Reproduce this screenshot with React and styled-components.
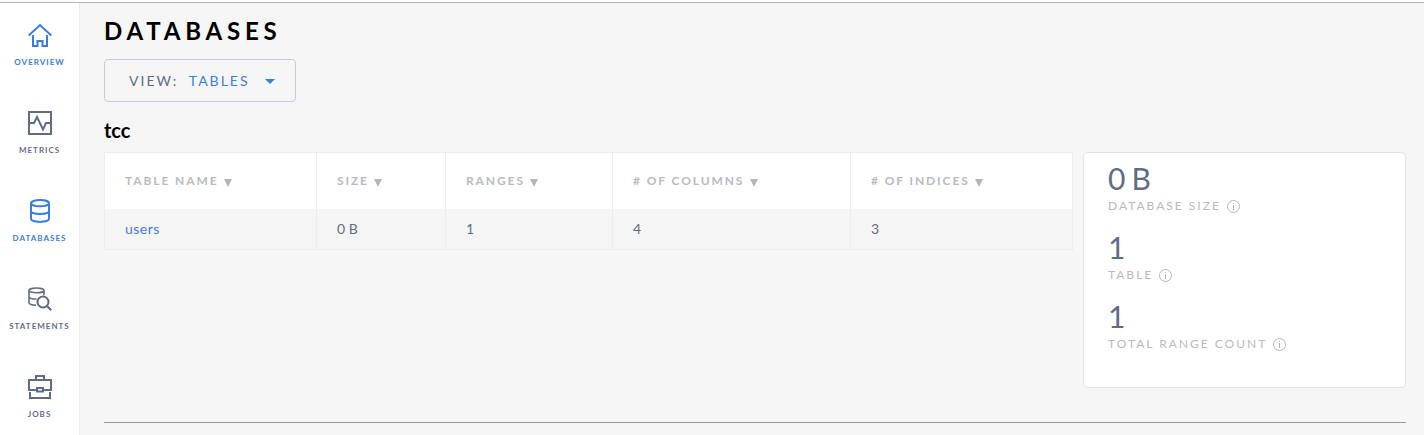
import React from "react";
import styled, { createGlobalStyle } from "styled-components";

const GlobalStyle = createGlobalStyle`
  *, *::before, *::after { box-sizing: border-box; }
  body {
    margin: 0;
    background: #f6f6f6;
    font-family: Lato, "Liberation Sans", sans-serif;
    color: #5f6c87;
    overflow: hidden;
  }
`;

const Page = styled.div`
  display: flex;
  flex-direction: column;
  height: 100vh;
  overflow: hidden;
`;

const TopEdge = styled.div`
  flex: none;
  height: 3px;
  background: #fcfcfc;
  border-bottom: 1px solid #b4b4b4;
`;

const Body = styled.div`
  display: flex;
  flex: 1;
  min-height: 0;
`;

const Sidebar = styled.nav`
  flex: none;
  width: 80px;
  background: #fff;
  border-right: 1px solid #ececec;
`;

const NavItem = styled.a`
  display: flex;
  flex-direction: column;
  align-items: center;
  height: 88px;
  padding-top: 20px;
  color: ${(p) => (p.$active ? "#3a7de1" : "#5f6c87")};

  svg {
    display: block;
    flex: none;
    margin-left: 1px;
  }
`;

const NavLabel = styled.span`
  margin-top: 10px;
  font-size: 8px;
  line-height: 10px;
  font-weight: 700;
  letter-spacing: 1px;
  white-space: nowrap;
`;

const Main = styled.main`
  flex: 1;
  min-width: 0;
  padding: 13px 18px 0 24px;
`;

const Title = styled.h1`
  margin: 0;
  font-size: 24px;
  line-height: 30px;
  font-weight: 700;
  letter-spacing: 4.8px;
  color: #000;
`;

const Dropdown = styled.div`
  display: flex;
  align-items: center;
  width: 192px;
  height: 43px;
  margin-top: 13px;
  padding: 0 20px 0 24px;
  border: 1px solid #c8cad8;
  border-radius: 4px;
  font-size: 14px;
  letter-spacing: 2px;
`;

const DropdownValue = styled.span`
  margin-left: 10.5px;
  color: #3a7de1;
`;

const Caret = styled.span`
  margin: 1px 0 0 15px;
  border: 5px solid transparent;
  border-top-color: #3a7de1;
  border-bottom: 0;
`;

const SectionTitle = styled.h2`
  margin: 16px 0 10px;
  font-size: 20px;
  line-height: 24px;
  font-weight: 700;
  letter-spacing: 0;
  color: #000;
`;

const Content = styled.div`
  display: flex;
  align-items: flex-start;
  gap: 10px;
`;

const Table = styled.table`
  flex: none;
  width: 969px;
  table-layout: fixed;
  border-collapse: collapse;
  border: 1px solid #ececec;
`;

const HeadCell = styled.th`
  width: ${(p) => p.$width}px;
  height: 56px;
  padding: 0 20px 1px;
  background: #fff;
  border-right: 1px solid #ececec;
  text-align: left;
  font-size: 12px;
  font-weight: 700;
  letter-spacing: 1.9px;
  white-space: nowrap;
  color: #b8bbbd;
`;

const SortMark = styled.span`
  display: inline-block;
  margin-left: 5.5px;
  border: 4px solid transparent;
  border-top: 8px solid #b4b7b9;
  border-bottom: 0;
  vertical-align: -2px;
`;

const Cell = styled.td`
  height: 41px;
  padding: 0 20px;
  background: #f5f5f5;
  border-right: 1px solid #ececec;
  font-size: 14px;
  color: ${(p) => (p.$link ? "#3a7de1" : "#5f6c87")};
  letter-spacing: ${(p) => (p.$link ? "0.5px" : "0")};
`;

const Summary = styled.aside`
  flex: 1;
  height: 236px;
  padding: 6px 24px;
  background: #fff;
  border: 1px solid #e4e4e4;
  border-radius: 5px;
`;

const Stat = styled.div`
  height: 69px;
`;

const StatValue = styled.div`
  font-size: 30px;
  line-height: 38px;
  word-spacing: -1.5px;
`;

const StatLabel = styled.div`
  display: flex;
  align-items: center;
  gap: 6px;
  height: 16px;
  font-size: 12px;
  letter-spacing: 2px;
  color: #b8bbbd;

  svg {
    display: block;
    margin-top: 3px;
  }
`;

const Rule = styled.hr`
  margin: 34px 0 0;
  border: 0;
  border-top: 1px solid #979797;
`;

const Icon = ({ children }) => (
  <svg width="24" height="24" viewBox="0 0 24 24" fill="none" stroke="currentColor" strokeWidth="2">
    {children}
  </svg>
);

const icons = {
  overview: (
    <Icon>
      <path d="M.7 12.5 12 2l11.3 10.5M5 12v11h4.5v-5h5v5H19V12" />
    </Icon>
  ),
  metrics: (
    <Icon>
      <path d="M1 1h22v22H1zM1 12h5l3-6 6 12.5 3-6.5h5" />
    </Icon>
  ),
  databases: (
    <Icon>
      <ellipse cx="12" cy="4.2" rx="9" ry="3.1" />
      <path d="M3 4.2v15.6c0 1.8 4 3.1 9 3.1s9-1.3 9-3.1V4.2M3 12c0 1.8 4 3.1 9 3.1s9-1.3 9-3.1" />
    </Icon>
  ),
  statements: (
    <Icon>
      <g strokeWidth="1.6">
        <ellipse cx="8.5" cy="3.4" rx="7.5" ry="2.4" />
        <path d="M1 3.4v12.4c0 1.3 3 2.3 7 2.4M16 3.4v4.8M1 9.7c0 1.4 3 2.4 7.5 2.3" />
      </g>
      <circle cx="15" cy="15" r="5.5" />
      <path d="m19 19 4.2 4.2" />
    </Icon>
  ),
  jobs: (
    <Icon>
      <path d="M8 5V1h8v4M9 15H1V5h22v10h-8M9 13h6v3.5H9zM2 17v6h20v-6" />
    </Icon>
  ),
};

const InfoIcon = () => (
  <svg width="13" height="13" viewBox="0 0 13 13" fill="none" stroke="#b4b7b9">
    <circle cx="6.5" cy="6.5" r="6" />
    <path d="M6.5 3v1M6.5 5v5" />
  </svg>
);

const navItems = [
  { id: "overview", label: "OVERVIEW", active: true },
  { id: "metrics", label: "METRICS" },
  { id: "databases", label: "DATABASES", active: true },
  { id: "statements", label: "STATEMENTS" },
  { id: "jobs", label: "JOBS" },
];

const columns = [
  { label: "TABLE NAME", value: "users", width: 212, link: true },
  { label: "SIZE", value: "0 B", width: 129 },
  { label: "RANGES", value: "1", width: 167 },
  { label: "# OF COLUMNS", value: "4", width: 238 },
  { label: "# OF INDICES", value: "3", width: 222 },
];

const stats = [
  { value: "0 B", label: "DATABASE SIZE" },
  { value: "1", label: "TABLE" },
  { value: "1", label: "TOTAL RANGE COUNT" },
];

export default function App() {
  return (
    <Page>
      <GlobalStyle />
      <TopEdge />
      <Body>
        <Sidebar>
          {navItems.map((item) => (
            <NavItem key={item.id} $active={item.active}>
              {icons[item.id]}
              <NavLabel>{item.label}</NavLabel>
            </NavItem>
          ))}
        </Sidebar>
        <Main>
          <Title>DATABASES</Title>
          <Dropdown>
            <span>VIEW:</span>
            <DropdownValue>TABLES</DropdownValue>
            <Caret />
          </Dropdown>
          <SectionTitle>tcc</SectionTitle>
          <Content>
            <Table>
              <thead>
                <tr>
                  {columns.map((c) => (
                    <HeadCell key={c.label} $width={c.width}>
                      {c.label}
                      <SortMark />
                    </HeadCell>
                  ))}
                </tr>
              </thead>
              <tbody>
                <tr>
                  {columns.map((c) => (
                    <Cell key={c.label} $link={c.link}>
                      {c.value}
                    </Cell>
                  ))}
                </tr>
              </tbody>
            </Table>
            <Summary>
              {stats.map((s) => (
                <Stat key={s.label}>
                  <StatValue>{s.value}</StatValue>
                  <StatLabel>
                    {s.label}
                    <InfoIcon />
                  </StatLabel>
                </Stat>
              ))}
            </Summary>
          </Content>
          <Rule />
        </Main>
      </Body>
    </Page>
  );
}
